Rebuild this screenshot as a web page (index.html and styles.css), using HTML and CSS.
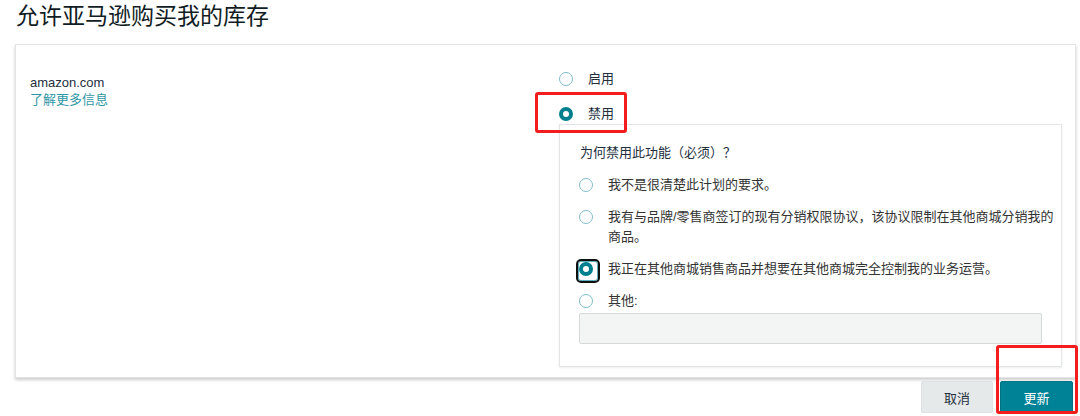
FILE: index.html
```html
<!DOCTYPE html>
<html lang="zh-CN">
<head>
<meta charset="utf-8">
<title>允许亚马逊购买我的库存</title>
<link rel="stylesheet" href="styles.css">
</head>
<body>
<h1 class="title">允许亚马逊购买我的库存</h1>
<div class="card">
  <div class="left">
    <div class="site">amazon.com</div>
    <a class="link" href="#">了解更多信息</a>
  </div>
  <div class="right">
    <div class="opt top"><span class="radio"></span><span>启用</span></div>
    <div class="opt top"><span class="radio checked"></span><span>禁用</span></div>
    <div class="reasons">
      <div class="q">为何禁用此功能（必须）？</div>
      <div class="list">
        <div class="opt"><span class="radio"></span><span class="txt">我不是很清楚此计划的要求。</span></div>
        <div class="opt"><span class="radio"></span><span class="txt">我有与品牌/零售商签订的现有分销权限协议，该协议限制在其他商城分销我的商品。</span></div>
        <div class="opt"><span class="radio checked focus"></span><span class="txt">我正在其他商城销售商品并想要在其他商城完全控制我的业务运营。</span></div>
        <div class="other">
          <div class="opt"><span class="radio"></span><span class="txt">其他:</span></div>
          <div class="textarea"></div>
        </div>
      </div>
    </div>
  </div>
</div>
<div class="actions">
  <button class="btn cancel">取消</button>
  <button class="btn primary">更新</button>
</div>
<div class="mark mark-disable"></div>
<div class="mark mark-update"></div>
</body>
</html>
```
FILE: styles.css
```css
* { box-sizing: border-box; }
body {
  margin: 0;
  background: #fff;
  font-family: "Liberation Sans", "Noto Sans CJK SC", sans-serif;
  font-size: 13px;
  color: #232f3e;
  position: relative;
  width: 1080px;
  height: 416px;
  overflow: hidden;
}
.title {
  margin: 0;
  padding: 1px 16px 0;
  font-size: 23px;
  line-height: 30px;
  font-weight: normal;
  color: #111c24;
}
.card {
  margin: 13px 0 0 15px;
  width: 1061px;
  height: 334px;
  border: 1px solid #e3e5e5;
  box-shadow: 0 2px 3px rgba(0, 0, 0, 0.2);
  padding: 24px 13px 10px 14px;
  display: grid;
  grid-template-columns: 529px 1fr;
}
.left {
  padding-top: 5px;
  line-height: 17px;
}
.site { color: #232f3e; }
.link {
  display: block;
  color: #2f96a6;
  text-decoration: none;
}
.right {
  display: flex;
  flex-direction: column;
}
.opt {
  display: flex;
  align-items: flex-start;
  gap: 15px;
  line-height: 20px;
}
.opt.top + .opt.top { margin-top: 15px; }
.radio {
  flex: none;
  position: relative;
  width: 14px;
  height: 14px;
  margin-top: 3px;
  border-radius: 50%;
  border: 1.5px solid #7dbdc8;
  background: #fff;
}
.radio.checked {
  border: 4.5px solid #00808f;
}
.radio.focus::after {
  content: "";
  position: absolute;
  left: -7.5px;
  top: -7.5px;
  width: 20px;
  height: 20px;
  border: 2px solid #0f1111;
  border-radius: 5px;
  box-shadow: inset 0 0 0 1px #5fb0bc;
}
.reasons {
  border: 1px solid #e3e6e6;
  box-shadow: 0 1px 2px rgba(0, 0, 0, 0.08);
  padding: 18px 19px 21px 19px;
  flex: 1;
}
.q {
  line-height: 20px;
  padding-left: 1px;
  color: #232f3e;
}
.list {
  margin-top: 12px;
  display: flex;
  flex-direction: column;
  gap: 12px;
}
.txt { color: #333; margin-right: -16px; }
.other { display: flex; flex-direction: column; gap: 2px; }
.textarea {
  height: 31px;
  background: #f3f4f4;
  border: 1px solid #d5d9d9;
  border-radius: 2px;
}
.actions {
  display: flex;
  justify-content: flex-end;
  gap: 7px;
  margin-top: 3px;
  padding-right: 7px;
}
.btn {
  font-family: inherit;
  font-size: 13px;
  height: 32px;
  padding: 0;
  border-radius: 2px;
  cursor: pointer;
}
.cancel {
  width: 72px;
  background: #e6e9e9;
  border: 1px solid #dde1e1;
  color: #232f3e;
}
.primary {
  width: 73px;
  background: #008296;
  border: 1px solid #007383;
  color: #fff;
}
.mark {
  position: absolute;
  border: 3px solid #f31d1d;
  border-radius: 3px;
  pointer-events: none;
}
.mark-disable { left: 535px; top: 92px; width: 92px; height: 41px; }
.mark-update { left: 996px; top: 345px; width: 82px; height: 69px; }
```
